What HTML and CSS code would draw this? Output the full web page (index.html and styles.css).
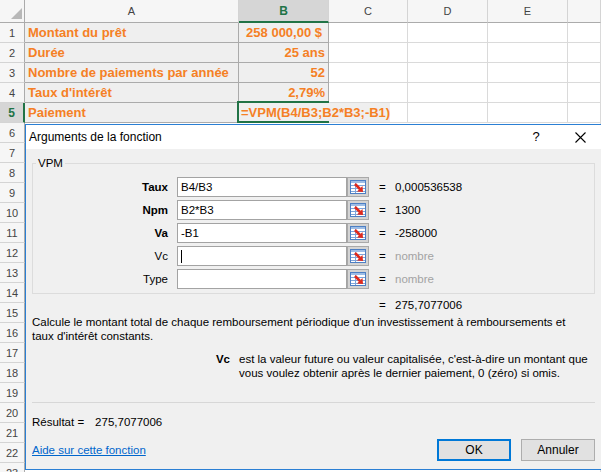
FILE: index.html
```html
<!DOCTYPE html>
<html lang="fr">
<head>
<meta charset="utf-8">
<title>Arguments de la fonction</title>
<link rel="stylesheet" href="styles.css">
</head>
<body>
<div class="sheet">
  <div class="corner"><svg width="24" height="22" viewBox="0 0 24 22"><polygon points="22,8 22,19 11,19" fill="#b8b8b8"/></svg></div>
  <div class="colhead">A</div>
  <div class="colhead sel">B</div>
  <div class="colhead">C</div>
  <div class="colhead">D</div>
  <div class="colhead">E</div>
  <div class="colhead"></div>

  <div class="rowhead">1</div>
  <div class="cell fmt">Montant du prêt</div>
  <div class="cell fmt num money">258 000,00 $</div>
  <div class="cell"></div><div class="cell"></div><div class="cell"></div><div class="cell"></div>

  <div class="rowhead">2</div>
  <div class="cell fmt">Durée</div>
  <div class="cell fmt num">25 ans</div>
  <div class="cell"></div><div class="cell"></div><div class="cell"></div><div class="cell"></div>

  <div class="rowhead">3</div>
  <div class="cell fmt">Nombre de paiements par année</div>
  <div class="cell fmt num">52</div>
  <div class="cell"></div><div class="cell"></div><div class="cell"></div><div class="cell"></div>

  <div class="rowhead">4</div>
  <div class="cell fmt">Taux d'intérêt</div>
  <div class="cell fmt num">2,79%</div>
  <div class="cell"></div><div class="cell"></div><div class="cell"></div><div class="cell"></div>

  <div class="rowhead sel">5</div>
  <div class="cell fmt">Paiement</div>
  <div class="cell fmt edit"><span class="editor">=VPM(B4/B3;B2*B3;-B1)</span></div>
  <div class="cell"></div><div class="cell"></div><div class="cell"></div><div class="cell"></div>

  <div class="rowhead">6</div><div class="cell span"></div>
  <div class="rowhead">7</div><div class="cell span"></div>
  <div class="rowhead">8</div><div class="cell span"></div>
  <div class="rowhead">9</div><div class="cell span"></div>
  <div class="rowhead">10</div><div class="cell span"></div>
  <div class="rowhead">11</div><div class="cell span"></div>
  <div class="rowhead">12</div><div class="cell span"></div>
  <div class="rowhead">13</div><div class="cell span"></div>
  <div class="rowhead">14</div><div class="cell span"></div>
  <div class="rowhead">15</div><div class="cell span"></div>
  <div class="rowhead">16</div><div class="cell span"></div>
  <div class="rowhead">17</div><div class="cell span"></div>
  <div class="rowhead">18</div><div class="cell span"></div>
  <div class="rowhead">19</div><div class="cell span"></div>
  <div class="rowhead">20</div><div class="cell span"></div>
  <div class="rowhead">21</div><div class="cell span"></div>
  <div class="rowhead">22</div><div class="cell span"></div>
  <div class="rowhead">23</div><div class="cell span"></div>
</div>

<div class="dialog">
  <div class="titlebar">
    <span class="title">Arguments de la fonction</span>
    <span class="tbtn">?</span>
    <span class="tbtn"><svg width="11" height="11" viewBox="0 0 11 11"><path d="M0.5 0.5 L10.5 10.5 M10.5 0.5 L0.5 10.5" stroke="#000" stroke-width="1.1" fill="none"/></svg></span>
  </div>
  <div class="dbody">
    <fieldset class="group">
      <legend>VPM</legend>
      <div class="arg">
        <span class="lbl strong">Taux</span><span class="inp">B4/B3</span>
        <span class="ref"><svg width="16" height="14" viewBox="0 0 16 14"><rect x="0.5" y="0.5" width="15" height="13" fill="#fff" stroke="#4d7fc4"/><rect x="1" y="1" width="14" height="2" fill="#9dbde6"/><path d="M1 5.5 H15 M1 8.5 H15 M1 11.5 H15 M5.5 3 V13" stroke="#7ea4d9" stroke-width="1"/><path d="M5 4 L10 9" stroke="#e0291c" stroke-width="2.6"/><polygon points="13,12 7,11.5 12.5,6" fill="#e0291c"/></svg></span>
        <span class="eq">=</span><span class="val">0,000536538</span>
      </div>
      <div class="arg">
        <span class="lbl strong">Npm</span><span class="inp">B2*B3</span>
        <span class="ref"><svg width="16" height="14" viewBox="0 0 16 14"><rect x="0.5" y="0.5" width="15" height="13" fill="#fff" stroke="#4d7fc4"/><rect x="1" y="1" width="14" height="2" fill="#9dbde6"/><path d="M1 5.5 H15 M1 8.5 H15 M1 11.5 H15 M5.5 3 V13" stroke="#7ea4d9" stroke-width="1"/><path d="M5 4 L10 9" stroke="#e0291c" stroke-width="2.6"/><polygon points="13,12 7,11.5 12.5,6" fill="#e0291c"/></svg></span>
        <span class="eq">=</span><span class="val">1300</span>
      </div>
      <div class="arg">
        <span class="lbl strong">Va</span><span class="inp">-B1</span>
        <span class="ref"><svg width="16" height="14" viewBox="0 0 16 14"><rect x="0.5" y="0.5" width="15" height="13" fill="#fff" stroke="#4d7fc4"/><rect x="1" y="1" width="14" height="2" fill="#9dbde6"/><path d="M1 5.5 H15 M1 8.5 H15 M1 11.5 H15 M5.5 3 V13" stroke="#7ea4d9" stroke-width="1"/><path d="M5 4 L10 9" stroke="#e0291c" stroke-width="2.6"/><polygon points="13,12 7,11.5 12.5,6" fill="#e0291c"/></svg></span>
        <span class="eq">=</span><span class="val">-258000</span>
      </div>
      <div class="arg">
        <span class="lbl">Vc</span><span class="inp"><span class="caret"></span></span>
        <span class="ref"><svg width="16" height="14" viewBox="0 0 16 14"><rect x="0.5" y="0.5" width="15" height="13" fill="#fff" stroke="#4d7fc4"/><rect x="1" y="1" width="14" height="2" fill="#9dbde6"/><path d="M1 5.5 H15 M1 8.5 H15 M1 11.5 H15 M5.5 3 V13" stroke="#7ea4d9" stroke-width="1"/><path d="M5 4 L10 9" stroke="#e0291c" stroke-width="2.6"/><polygon points="13,12 7,11.5 12.5,6" fill="#e0291c"/></svg></span>
        <span class="eq">=</span><span class="val hint">nombre</span>
      </div>
      <div class="arg">
        <span class="lbl">Type</span><span class="inp"></span>
        <span class="ref"><svg width="16" height="14" viewBox="0 0 16 14"><rect x="0.5" y="0.5" width="15" height="13" fill="#fff" stroke="#4d7fc4"/><rect x="1" y="1" width="14" height="2" fill="#9dbde6"/><path d="M1 5.5 H15 M1 8.5 H15 M1 11.5 H15 M5.5 3 V13" stroke="#7ea4d9" stroke-width="1"/><path d="M5 4 L10 9" stroke="#e0291c" stroke-width="2.6"/><polygon points="13,12 7,11.5 12.5,6" fill="#e0291c"/></svg></span>
        <span class="eq">=</span><span class="val hint">nombre</span>
      </div>
    </fieldset>
    <div class="total"><span class="eq">=</span><span class="val">275,7077006</span></div>
    <p class="desc">Calcule le montant total de chaque remboursement périodique d'un investissement à remboursements et<br>taux d'intérêt constants.</p>
    <div class="argdesc"><span class="adl">Vc</span><span class="adt">est la valeur future ou valeur capitalisée, c'est-à-dire un montant que<br>vous voulez obtenir après le dernier paiement, 0 (zéro) si omis.</span></div>
    <div class="sep"></div>
    <div class="resultat">Résultat =<span class="rv">275,7077006</span></div>
    <div class="footer">
      <a class="helplink" href="#">Aide sur cette fonction</a>
      <span class="spacer"></span>
      <button class="btn ok">OK</button>
      <button class="btn">Annuler</button>
    </div>
  </div>
</div>
</body>
</html>
```

FILE: styles.css
```css
html, body {
  margin: 0;
  padding: 0;
}
body {
  width: 601px;
  height: 472px;
  overflow: hidden;
  position: relative;
  background: #ffffff;
  font-family: "Liberation Sans", Arial, sans-serif;
}

/* ---------- spreadsheet ---------- */
.sheet {
  display: grid;
  grid-template-columns: 25px 214px 90px 79px 80px 80px 33px;
  grid-template-rows: 23px repeat(23, 20px);
}
.sheet > div {
  box-sizing: border-box;
  border-right: 1px solid #dadada;
  border-bottom: 1px solid #dadada;
}
.corner {
  background: #f6f6f6;
  border-right-color: #ababab !important;
  border-bottom-color: #ababab !important;
}
.corner svg { display: block; }
.colhead {
  background: #f6f6f6;
  color: #444;
  font-size: 11px;
  display: flex;
  align-items: center;
  justify-content: center;
  border-right-color: #d4d4d4 !important;
  border-bottom-color: #ababab !important;
}
.colhead.sel {
  background: #d6d6d6;
  color: #217346;
  font-weight: bold;
  font-size: 12px;
  border-bottom: 2px solid #217346 !important;
}
.rowhead {
  background: #f6f6f6;
  color: #444;
  font-size: 11px;
  display: flex;
  align-items: center;
  justify-content: center;
  border-right-color: #ababab !important;
  border-bottom-color: #d4d4d4 !important;
}
.rowhead.sel {
  background: #d6d6d6;
  color: #217346;
  font-weight: bold;
  font-size: 12px;
  border-right: 2px solid #217346 !important;
}
.cell.span { grid-column: 2 / -1; }
.cell.fmt {
  background: #efefef;
  border-color: #ababab !important;
  color: #f58025;
  font-weight: bold;
  font-size: 13px;
  padding: 0 3px;
  display: flex;
  align-items: center;
  white-space: nowrap;
}
.cell.num { justify-content: flex-end; }
.cell.money { padding-right: 6px; }
.cell.edit {
  position: relative;
  padding: 0;
  overflow: visible;
  align-items: flex-start;
}
.cell.edit::after {
  content: "";
  position: absolute;
  left: -2px;
  top: -2px;
  right: -1px;
  bottom: -1px;
  border: 2px solid #217346;
  border-right: none;
  z-index: 3;
}
.editor {
  position: relative;
  z-index: 2;
  display: block;
  box-sizing: border-box;
  width: 168px;
  height: 19px;
  line-height: 19px;
  padding-left: 2px;
  background: #efefef;
}

/* ---------- dialog ---------- */
.dialog {
  position: absolute;
  left: 25px;
  top: 124px;
  width: 578px;
  height: 346px;
  box-sizing: border-box;
  border: 1px solid #2a7fd4;
  background: #f0f0f0;
  display: flex;
  flex-direction: column;
  font-size: 11.5px;
  line-height: 14px;
  color: #000;
}
.titlebar {
  height: 24px;
  flex: none;
  background: #ffffff;
  display: flex;
  align-items: center;
  padding-left: 3px;
  font-size: 12px;
}
.title { flex: 1; }
.tbtn {
  width: 44px;
  height: 24px;
  display: flex;
  align-items: center;
  justify-content: center;
  font-size: 13px;
}
.dbody {
  flex: 1;
  padding: 0 7px 0 6px;
  display: flex;
  flex-direction: column;
}
.group {
  margin: 7px 0 0 0;
  padding: 7px 0 4px 0;
  border: 1px solid #dcdcdc;
  min-inline-size: 0;
}
.group legend {
  padding: 0 2px;
  margin-left: 3px;
  line-height: 14px;
}
.arg {
  display: flex;
  align-items: center;
  height: 20px;
  margin-bottom: 3px;
}
.arg:last-child { margin-bottom: 0; }
.lbl {
  width: 135px;
  text-align: right;
  margin-right: 9px;
}
.lbl.strong { font-weight: bold; }
.inp {
  box-sizing: border-box;
  width: 170px;
  height: 20px;
  border: 1px solid #a3a3a3;
  background: #ffffff;
  padding: 0 3px;
  line-height: 18px;
  display: flex;
  align-items: center;
}
.caret {
  display: block;
  width: 1px;
  height: 13px;
  background: #000;
}
.ref {
  box-sizing: border-box;
  width: 22px;
  height: 20px;
  border: 1px solid #a9a9a9;
  background: #d4d4d4;
  display: flex;
  align-items: center;
  justify-content: center;
}
.ref svg { display: block; }
.eq {
  width: 16px;
  margin-left: 10px;
}
.val.hint { color: #a3a3a3; }
.total {
  display: flex;
  margin-top: 4px;
  padding-left: 347px;
}
.total .eq { margin-left: 0; }
.desc {
  margin: 3px 0 0 0;
  white-space: nowrap;
}
.argdesc {
  display: flex;
  margin-top: 9px;
  white-space: nowrap;
}
.adl {
  width: 198px;
  text-align: right;
  font-weight: bold;
  margin-right: 9px;
}
.sep {
  margin-top: 22px;
  height: 1px;
  background: #d7d7d7;
}
.resultat {
  margin-top: 12px;
}
.rv { margin-left: 11px; }
.footer {
  margin-top: 10px;
  display: flex;
  align-items: center;
}
.helplink {
  color: #0066cc;
  text-decoration: underline;
}
.spacer { flex: 1; }
.btn {
  box-sizing: border-box;
  width: 74px;
  height: 22px;
  margin: 0 0 0 10px;
  padding: 0;
  border: 1px solid #adadad;
  background: #e1e1e1;
  font-family: inherit;
  font-size: 12px;
  color: #000;
}
.btn.ok { border: 2px solid #0078d7; }
```
